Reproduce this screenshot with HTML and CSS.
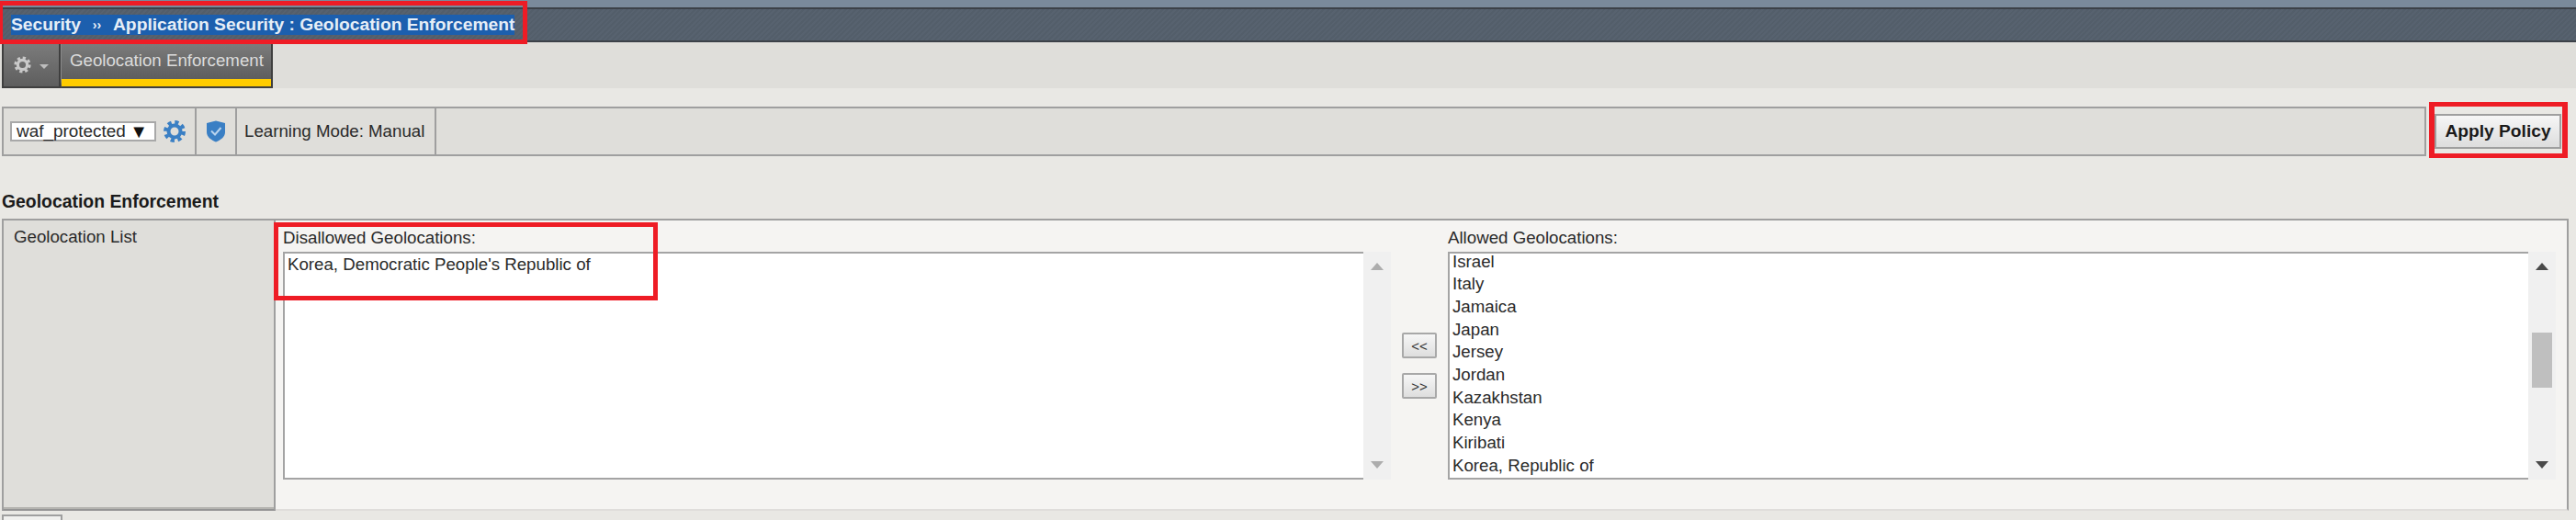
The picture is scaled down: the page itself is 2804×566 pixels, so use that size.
FILE: index.html
```html
<!DOCTYPE html>
<html lang="en">
<head>
<meta charset="utf-8">
<title>Geolocation Enforcement</title>
<link rel="stylesheet" href="styles.css">
</head>
<body>
<div class="strip"></div>
<header class="banner">
  <div class="crumbs"><span class="crumb-a">Security</span><span class="crumb-sep">››</span><span class="crumb-b">Application Security : Geolocation Enforcement</span></div>
</header>
<nav class="tabbar">
  <div class="tab-gear">
    <svg class="gear-small" viewBox="0 0 24 24" width="19" height="19"><circle cx="12" cy="12" r="6.5" fill="none" stroke="#c9c9c9" stroke-width="4"/><circle cx="12" cy="12" r="9.5" fill="none" stroke="#c9c9c9" stroke-width="4" stroke-dasharray="4 3.46"/></svg>
    <span class="caret"></span>
  </div>
  <div class="tab-active">Geolocation Enforcement</div>
</nav>
<section class="toolrow">
  <div class="toolbar">
    <div class="cell cell-policy">
      <div class="select"><span>waf_protected</span><span class="select-arrow">▼</span></div>
      <svg class="gear-blue" viewBox="0 0 24 24" width="24" height="24"><circle cx="12" cy="12" r="6.5" fill="none" stroke="#3a7fc4" stroke-width="4"/><circle cx="12" cy="12" r="10" fill="none" stroke="#3a7fc4" stroke-width="4" stroke-dasharray="4.2 3.65"/></svg>
    </div>
    <div class="cell cell-shield">
      <svg viewBox="0 0 22 24" width="22" height="24"><path d="M1 3 L11 0.5 L21 3 V13 C21 18 16 21.5 11 23.5 C6 21.5 1 18 1 13 Z" fill="#3a7fc4"/><path d="M6 11.5 L10 15.5 L16.5 8" fill="none" stroke="#b9d4ee" stroke-width="2"/></svg>
    </div>
    <div class="cell cell-mode">Learning Mode: Manual</div>
    <div class="cell cell-rest"></div>
  </div>
  <button class="apply">Apply Policy</button>
</section>
<h2 class="heading">Geolocation Enforcement</h2>
<section class="panel">
  <div class="panel-label">Geolocation List</div>
  <div class="panel-body">
    <div class="list-col">
      <div class="list-title">Disallowed Geolocations:</div>
      <div class="list-wrap">
        <div class="list">
          <div class="opt">Korea, Democratic People's Republic of</div>
        </div>
        <div class="scroll scroll-off">
          <span class="arr-up"></span>
          <span class="arr-down"></span>
        </div>
      </div>
    </div>
    <div class="movers">
      <button class="move">&lt;&lt;</button>
      <button class="move">&gt;&gt;</button>
    </div>
    <div class="list-col">
      <div class="list-title">Allowed Geolocations:</div>
      <div class="list-wrap">
        <div class="list list-scrolled">
          <div class="opt">Israel</div>
          <div class="opt">Italy</div>
          <div class="opt">Jamaica</div>
          <div class="opt">Japan</div>
          <div class="opt">Jersey</div>
          <div class="opt">Jordan</div>
          <div class="opt">Kazakhstan</div>
          <div class="opt">Kenya</div>
          <div class="opt">Kiribati</div>
          <div class="opt">Korea, Republic of</div>
        </div>
        <div class="scroll">
          <span class="arr-up"></span>
          <span class="thumb"></span>
          <span class="arr-down"></span>
        </div>
      </div>
    </div>
  </div>
</section>
<div class="bottom-btn"></div>
<div class="mark mark-crumbs"></div>
<div class="mark mark-apply"></div>
<div class="mark mark-list"></div>
</body>
</html>
```
FILE: styles.css
```css
* { box-sizing: border-box; }
html, body { margin: 0; padding: 0; }
body {
  width: 2804px;
  height: 566px;
  overflow: hidden;
  position: relative;
  background: #e9e8e4;
  font-family: "Liberation Sans", Arial, sans-serif;
  font-size: 18.7px;
  color: #2a2a2a;
}
.strip { height: 8px; background: #7a8a9b; }
.banner {
  height: 38px;
  border-top: 2px solid #3c4148;
  border-bottom: 2px solid #3c4148;
  background: repeating-linear-gradient(135deg, #57626f 0 2px, #535e6a 2px 4px);
  padding: 6px 0 0 12px;
}
.crumbs {
  display: inline-flex;
  height: 22px;
  line-height: 22px;
  background: #1c5fae;
  color: #e6eef7;
  font-weight: bold;
  font-size: 19.25px;
  white-space: nowrap;
}
.crumb-sep { width: 35px; text-align: center; font-size: 14px; }
.tabbar {
  height: 50px;
  background: #dfdeda;
  padding: 2px 0 0 2px;
  display: flex;
}
.tab-gear {
  width: 64px;
  height: 48px;
  background: linear-gradient(#7b7b7b, #5e5e5e);
  border: 2px solid #3f3f3f;
  border-top: 0;
  display: flex;
  align-items: center;
  justify-content: center;
  gap: 9px;
  padding-bottom: 2px;
}
.caret {
  width: 0;
  height: 0;
  border-left: 5px solid transparent;
  border-right: 5px solid transparent;
  border-top: 5px solid #bdbdbd;
  margin-top: 4px;
}
.tab-active {
  width: 231px;
  height: 48px;
  background: linear-gradient(#7b7b7b, #5e5e5e);
  border-bottom: 10px solid #3f3f3f;
  border-right: 2px solid #3f3f3f;
  border-left: 1px solid #8a8a8a;
  color: #dcdcdc;
  padding: 7px 0 0 9px;
  font-size: 18.7px;
  line-height: 22px;
  position: relative;
  white-space: nowrap;
}
.tab-active::after {
  content: "";
  position: absolute;
  left: 0;
  right: 0;
  bottom: -8px;
  height: 8px;
  background: #ffcc00;
}
.toolrow {
  margin-top: 20px;
  padding: 0 0 0 2px;
  display: flex;
  align-items: flex-start;
}
.toolbar {
  width: 2639px;
  height: 54px;
  border: 2px solid #9f9f9f;
  background: #dfdeda;
  display: flex;
}
.cell { border-right: 2px solid #9f9f9f; height: 100%; display: flex; align-items: center; }
.cell-policy { width: 210px; padding-left: 7px; gap: 8px; }
.cell-shield { width: 44px; justify-content: center; }
.cell-mode { width: 217px; padding-left: 8px; white-space: nowrap; }
.cell-rest { flex: 1; border-right: 0; }
.select {
  width: 159px;
  height: 22px;
  border: 2px solid #a8a8a8;
  background: #fff;
  display: flex;
  justify-content: space-between;
  align-items: center;
  padding: 0 7px 0 5px;
  font-size: 18.9px;
  line-height: 18px;
  white-space: nowrap;
}
.select-arrow { font-size: 20px; color: #111; }
.apply {
  margin: 8px 0 0 9px;
  width: 138px;
  height: 38px;
  border: 2px solid #9f9f9f;
  background: linear-gradient(#f6f6f6, #dddddd);
  font-family: inherit;
  font-weight: bold;
  font-size: 19.2px;
  color: #1a1a1a;
  padding: 0;
}
.heading {
  margin: 0;
  padding: 38px 0 0 2px;
  height: 68px;
  font-size: 19.4px;
  line-height: 22px;
  font-weight: bold;
  color: #1a1a1a;
}
.panel {
  margin-left: 2px;
  width: 2794px;
  height: 318px;
  display: flex;
  border-top: 2px solid #9f9f9f;
}
.panel-label {
  width: 298px;
  background: #dfdeda;
  border-left: 2px solid #9f9f9f;
  border-right: 2px solid #9f9f9f;
  border-bottom: 2px solid #949494;
  box-shadow: inset 0 -2px 0 #b5b4b0;
  padding: 6px 0 0 11px;
  line-height: 24px;
}
.panel-body {
  flex: 1;
  background: #f5f4f2;
  border-right: 2px solid #9f9f9f;
  border-bottom: 2px solid #dfdddb;
  padding: 0 0 0 8px;
  display: flex;
}
.list-col { width: 1206px; }
.list-title { height: 34px; padding-top: 7px; line-height: 24px; }
.list-wrap { display: flex; height: 248px; }
.list {
  flex: 1;
  background: #fff;
  border: 2px solid #a4a4a4;
  border-right: 0;
  overflow: hidden;
  padding: 0 0 0 3px;
}
.list-scrolled .opt:first-child { margin-top: -3.4px; }
.opt { height: 24.67px; line-height: 24.67px; white-space: nowrap; }
.scroll {
  width: 30px;
  background: #f0f0f0;
  position: relative;
  display: flex;
  flex-direction: column;
  align-items: center;
  justify-content: space-between;
  padding: 12px 0;
}
.arr-up, .arr-down { width: 0; height: 0; border-left: 7px solid transparent; border-right: 7px solid transparent; }
.arr-up { border-bottom: 8px solid #4a4a4a; }
.arr-down { border-top: 8px solid #4a4a4a; }
.scroll-off .arr-up { border-bottom-color: #adadad; }
.scroll-off .arr-down { border-top-color: #adadad; }
.thumb { position: absolute; left: 4px; top: 88px; width: 22px; height: 60px; background: #bfbfbf; }
.movers {
  width: 62px;
  padding: 122px 0 0 12px;
  display: flex;
  flex-direction: column;
  gap: 16px;
}
.move {
  width: 38px;
  height: 28px;
  padding: 0;
  border: 2px solid #a8a8a8;
  border-radius: 2px;
  background: linear-gradient(#f6f6f6, #dedede);
  font-family: inherit;
  font-size: 15px;
  color: #333;
}
.bottom-btn {
  margin: 4px 0 0 2px;
  width: 66px;
  height: 10px;
  border: 2px solid #9f9f9f;
  background: #f0f0ee;
}
.mark { position: absolute; border-style: solid; border-color: #ee1c25; pointer-events: none; }
.mark-crumbs { left: 0; top: 1px; width: 574px; height: 47px; border-width: 5px 5px 5px 3px; }
.mark-apply { left: 2644px; top: 111px; width: 151px; height: 61px; border-width: 5px 6px; }
.mark-list { left: 298px; top: 242px; width: 418px; height: 85px; border-width: 5px; }
```
